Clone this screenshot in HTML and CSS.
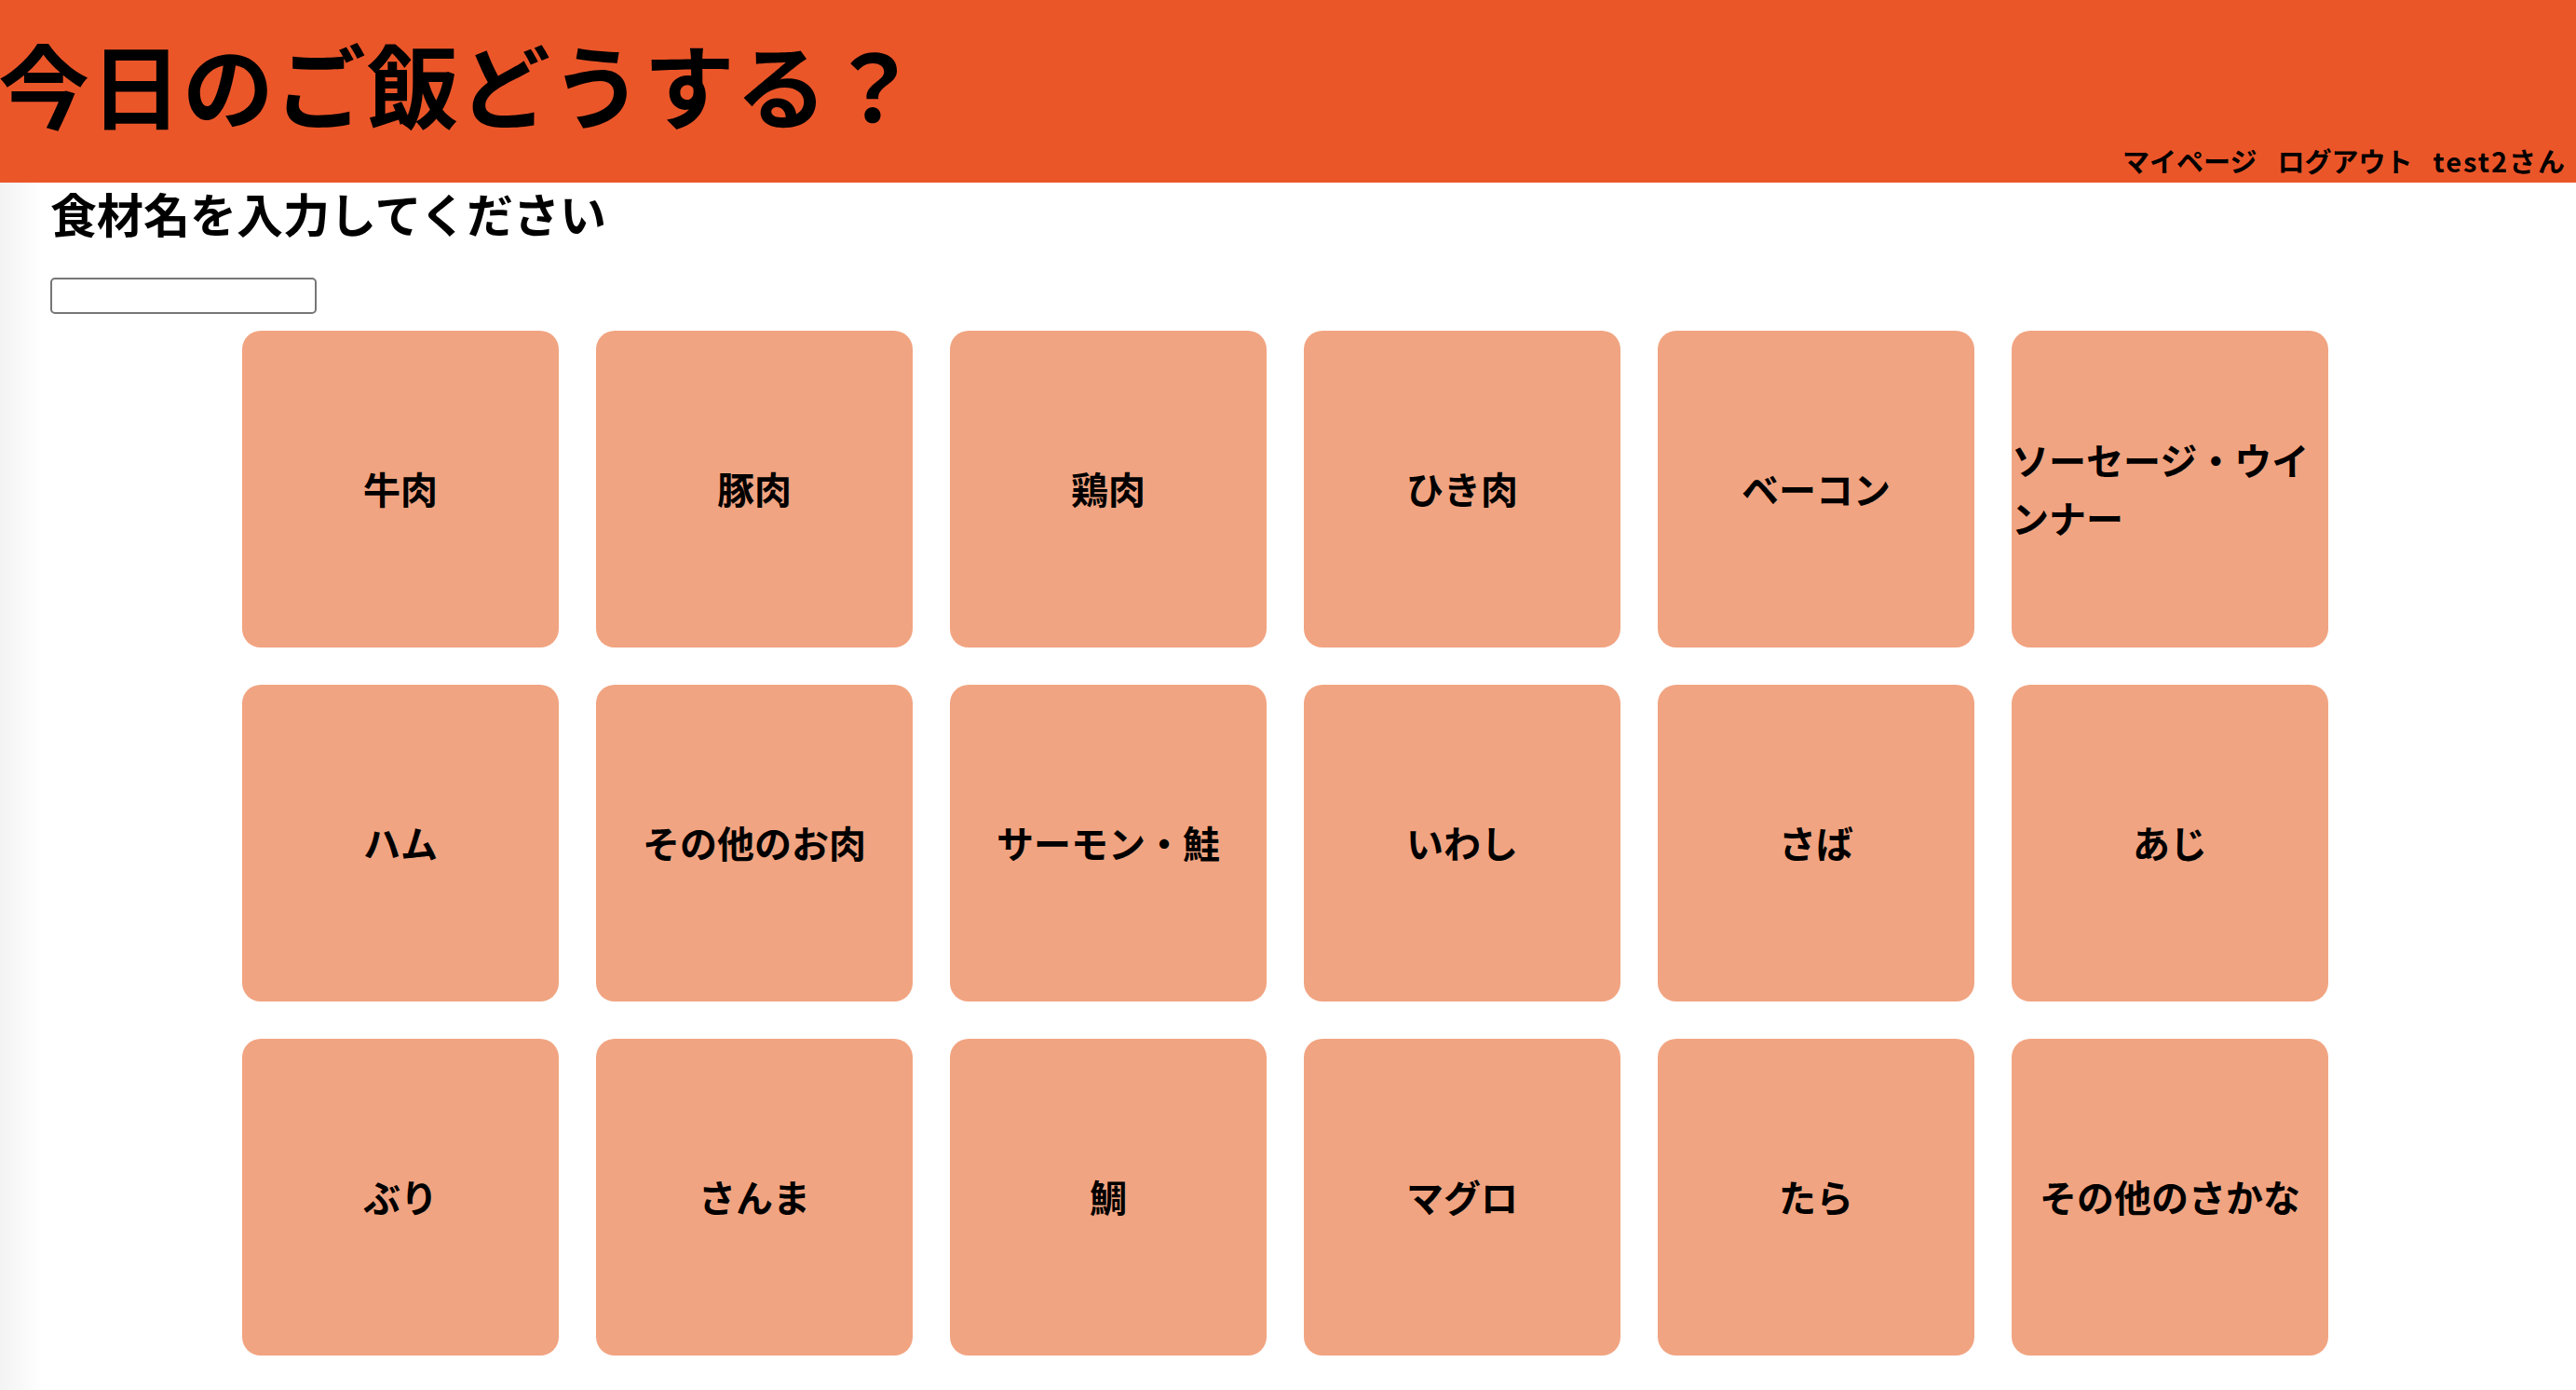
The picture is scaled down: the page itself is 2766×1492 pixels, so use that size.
FILE: index.html
```html
<!DOCTYPE html>
<html lang="ja">
<head>
<meta charset="utf-8">
<title>今日のご飯どうする？</title>
<link rel="stylesheet" href="styles.css">
</head>
<body>
<header class="site-header">
  <h1 class="site-title">今日のご飯どうする？</h1>
  <nav class="user-nav">
    <a class="nav-link" href="#">マイページ</a>
    <a class="nav-link" href="#">ログアウト</a>
    <span class="nav-user">test2さん</span>
  </nav>
</header>
<main class="main">
  <h2 class="search-title">食材名を入力してください</h2>
  <input class="search-input" type="text">
  <div class="food-grid">
    <div class="food-card">牛肉</div>
    <div class="food-card">豚肉</div>
    <div class="food-card">鶏肉</div>
    <div class="food-card">ひき肉</div>
    <div class="food-card">ベーコン</div>
    <div class="food-card">ソーセージ・ウインナー</div>
    <div class="food-card">ハム</div>
    <div class="food-card">その他のお肉</div>
    <div class="food-card">サーモン・鮭</div>
    <div class="food-card">いわし</div>
    <div class="food-card">さば</div>
    <div class="food-card">あじ</div>
    <div class="food-card">ぶり</div>
    <div class="food-card">さんま</div>
    <div class="food-card">鯛</div>
    <div class="food-card">マグロ</div>
    <div class="food-card">たら</div>
    <div class="food-card">その他のさかな</div>
  </div>
</main>
</body>
</html>
```
FILE: styles.css
```css
html, body {
  margin: 0;
  padding: 0;
}
body {
  font-family: "Noto Sans CJK JP", "Noto Sans", sans-serif;
  color: #000;
  background: linear-gradient(to right, #f3f3f3 0, #ffffff 46px);
  min-height: 1492px;
}
.site-header {
  height: 196px;
  background: #eb5629;
  display: flex;
  justify-content: space-between;
  align-items: flex-start;
}
.site-title {
  margin: 39px 0 0 -2px;
  font-size: 98px;
  line-height: 1;
  font-weight: 700;
  letter-spacing: 1px;
}
.user-nav {
  align-self: flex-end;
  display: flex;
  gap: 22px;
  padding: 0 10px 9px 0;
  font-size: 29px;
  line-height: 1;
  font-weight: 700;
}
.nav-link, .nav-user {
  color: #000;
  text-decoration: none;
}
.nav-user {
  letter-spacing: 2px;
}
.main {
  padding: 0 60px 0 54px;
}
.search-title {
  margin: 7px 0 0;
  font-size: 50px;
  line-height: 1;
  font-weight: 700;
}
.search-input {
  display: block;
  box-sizing: border-box;
  margin: 45px 0 0;
  width: 286px;
  height: 39px;
  border: 2px solid #767676;
  border-radius: 5px;
  background: #fff;
  padding: 0 6px;
}
.food-grid {
  margin-top: 18px;
  display: grid;
  grid-template-columns: repeat(6, 340px);
  grid-auto-rows: 340px;
  gap: 40px;
  justify-content: center;
}
.food-card {
  background: #f1a481;
  border-radius: 20px;
  display: flex;
  align-items: center;
  justify-content: center;
  padding-bottom: 3px;
  box-sizing: border-box;
  font-size: 40px;
  line-height: 1.55;
  font-weight: 700;
}
```
